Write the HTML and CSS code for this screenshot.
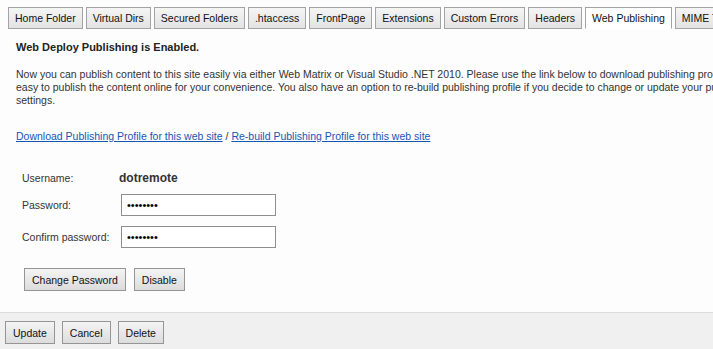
FILE: index.html
```html
<!DOCTYPE html>
<html lang="en">
<head>
    <meta charset="UTF-8">
    <title>Web Publishing</title>
    <link rel="stylesheet" href="styles.css">
</head>
<body>
    <div class="page">
        <!-- Tabs -->
        <div class="tabs">
            <a class="tab" href="#">Home Folder</a>
            <a class="tab" href="#">Virtual Dirs</a>
            <a class="tab" href="#">Secured Folders</a>
            <a class="tab" href="#">.htaccess</a>
            <a class="tab" href="#">FrontPage</a>
            <a class="tab" href="#">Extensions</a>
            <a class="tab" href="#">Custom Errors</a>
            <a class="tab" href="#">Headers</a>
            <a class="tab active" href="#">Web Publishing</a>
            <a class="tab" href="#">MIME Types</a>
        </div>

        <div class="panel">
            <h2 class="status">Web Deploy Publishing is Enabled.</h2>

            <p class="intro">
                Now you can publish content to this site easily via either Web Matrix or Visual Studio .NET 2010. Please use the link below to download publishing profile. It is very easy to publish the content online for your convenience. You also have an option to re-build publishing profile if you decide to change or update your publishing settings.
            </p>

            <p class="links">
                <a href="#">Download Publishing Profile for this web site</a> / <a href="#">Re-build Publishing Profile for this web site</a>
            </p>

            <div class="form">
                <div class="row short">
                    <span class="label">Username:</span>
                    <span class="value">dotremote</span>
                </div>
                <div class="row">
                    <label class="label" for="pwd">Password:</label>
                    <input class="field" type="password" id="pwd" value="12345678">
                </div>
                <div class="row">
                    <label class="label" for="pwd2">Confirm password:</label>
                    <input class="field" type="password" id="pwd2" value="12345678">
                </div>
                <div class="actions">
                    <button class="btn">Change Password</button>
                    <button class="btn">Disable</button>
                </div>
            </div>
        </div>

        <!-- Footer buttons -->
        <div class="footer">
            <button class="btn">Update</button>
            <button class="btn">Cancel</button>
            <button class="btn">Delete</button>
        </div>
    </div>
</body>
</html>
```

FILE: styles.css
```css
/* General Styles */
body {
    margin: 0;
    padding: 0;
    font-family: 'Liberation Sans', Arial, sans-serif;
    font-size: 10.5px;
    color: #333;
    background: #fdfdfd;
    overflow: hidden;
}

.page {
    width: 900px;
}

/* Tabs */
.tabs {
    display: flex;
    gap: 3px;
    padding: 7px 0 0 8px;
}

.tab {
    display: block;
    height: 20px;
    line-height: 20px;
    padding: 0 6px;
    border: 1px solid #a3a3a3;
    background: linear-gradient(#f5f5f5, #e3e3e3);
    color: #111;
    text-decoration: none;
    white-space: nowrap;
}

.tab.active {
    background: #fff;
    border-bottom-color: #fff;
}

/* Panel */
.panel {
    height: 272px;
    padding: 11px 16px 0;
}

.status {
    margin: 0;
    font-size: 11px;
    line-height: 14px;
    font-weight: bold;
    color: #222;
}

.intro {
    width: 768px;
    margin: 14px 0 0;
    line-height: 13px;
}

.links {
    margin: 23px 0 0;
    line-height: 13px;
}

.links a {
    color: #1656b4;
}

/* Form */
.form {
    margin-top: 24px;
    padding-left: 6px;
}

.row {
    display: flex;
    align-items: center;
    height: 22px;
    margin-bottom: 10px;
}

.row.short {
    margin-bottom: 5px;
}

.label {
    width: 97px;
}

.value {
    font-weight: bold;
    font-size: 12px;
    color: #333;
}

.field {
    box-sizing: border-box;
    width: 155px;
    height: 22px;
    margin: 0 0 0 2px;
    padding: 0 5px;
    border: 1px solid #8e8e8e;
    background: #fff;
    font-family: 'Liberation Sans', Arial, sans-serif;
    font-size: 11px;
    color: #000;
    outline: none;
}

.actions {
    display: flex;
    gap: 8px;
    margin-top: 20px;
    padding-left: 2px;
}

.btn {
    height: 23px;
    padding: 0 7px;
    border: 1px solid #959595;
    border-radius: 0;
    background: linear-gradient(#f4f4f4, #dcdcdc);
    font-family: 'Liberation Sans', Arial, sans-serif;
    font-size: 10.5px;
    color: #111;
    cursor: pointer;
}

/* Footer */
.footer {
    display: flex;
    gap: 7px;
    height: 40px;
    padding: 8px 0 0 5px;
    border-top: 1px solid #dcdcdc;
    background: #f0f0f0;
}
```
